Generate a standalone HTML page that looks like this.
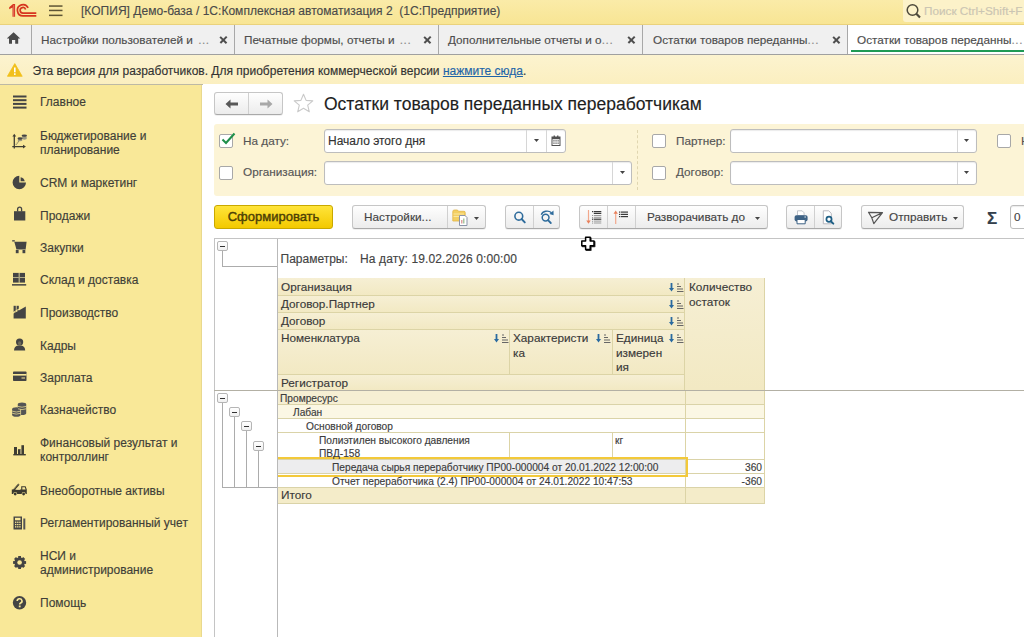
<!DOCTYPE html>
<html><head><meta charset="utf-8">
<style>
*{box-sizing:border-box;margin:0;padding:0}
html,body{width:1024px;height:637px;overflow:hidden;background:#fff;font-family:"Liberation Sans",sans-serif;font-size:12px;color:#4d4d4d;-webkit-text-stroke:0.15px currentColor}
.a{position:absolute;white-space:nowrap}
#title{position:absolute;left:0;top:0;width:1024px;height:25px;background:linear-gradient(#faeba8,#f8e594);border-bottom:1px solid #ead27c}
#tabs{position:absolute;left:0;top:25px;width:1024px;height:30px;background:#f0f0f0;border-bottom:1px solid #a0a0a0}
.tab{position:absolute;white-space:nowrap;top:0;height:29px;border-right:1px solid #a8a8a8;line-height:29px;font-size:12px;color:#4d4d4d;overflow:hidden}
.tab .t{position:absolute;left:9px;top:0px;font-size:11.75px}
.el{color:#8a8a8a;letter-spacing:0.6px;margin-left:2px}
.tab .x{position:absolute;right:7px;top:11px;width:7px;height:7px;background:none}
.tab .x:before,.tab .x:after{content:"";position:absolute;left:-0.8px;top:2.6px;width:8.6px;height:1.7px;background:#4e4e4e;transform:rotate(45deg)}
.tab .x:after{transform:rotate(-45deg)}
#warn{position:absolute;left:0;top:55px;width:1024px;height:30px;background:linear-gradient(#fcf3cf,#fbefc0);border-bottom:1px solid #bdb9a5}
#side{position:absolute;left:0;top:85px;width:202px;height:552px;background:#f9e898;border-right:1px solid #e9d98e}
.si{position:absolute;left:40px;font-size:12px;color:#413f38;line-height:14px}
.ic{position:absolute;left:12px}
#main{position:absolute;left:203px;top:84px;width:821px;height:553px;background:#fff}

.btn{position:absolute;border:1px solid #c6c6c6;border-bottom-color:#a9a9a9;border-radius:3px;background:linear-gradient(#fefefe,#ececec);box-shadow:0 1px 0 rgba(0,0,0,.06)}
.dv{position:absolute;top:0;bottom:0;width:1px;background:#d0d0d0}
.cb{position:absolute;width:14px;height:14px;border:1px solid #a8a8a8;border-radius:2px;background:#fff}
.lbl{position:absolute;white-space:nowrap;font-size:11.75px;color:#555}
.inp{position:absolute;border:1px solid #bdbdbd;border-radius:3px;background:#fff;box-shadow:inset 0 1px 1px rgba(0,0,0,.08)}
.ddv{position:absolute;top:0;bottom:0;width:1px;background:#d6d6d6}
.btxt{position:absolute;white-space:nowrap;font-size:11.75px;color:#444}

.hc{position:absolute;background:linear-gradient(#f6efd4,#f2e9c3);border-right:1px solid #dcd4a6;border-bottom:1px solid #dcd4a6}
.ht{position:absolute;white-space:nowrap;font-size:11.75px;color:#3a3a3a;line-height:14.5px}
.dr{position:absolute;left:278px;width:487px;border-bottom:1px solid #dad3a8}
.dt{position:absolute;white-space:nowrap;font-size:10.2px;color:#3c3c3c;line-height:13px}
.mb{position:absolute;width:11px;height:10px;border:1px solid #b5b5b5;border-radius:2px;background:linear-gradient(#fff,#f0f0f0)}
.mb:after{content:"";position:absolute;left:2px;top:4px;width:5px;height:1px;background:#333}
.tl{position:absolute;background:#acacac}
.si2{position:absolute}
</style></head><body>
<div id="title">
  <svg style="position:absolute;left:8px;top:3px" width="30" height="15" viewBox="0 0 30 15"><path d="M1.2 4.2 5 0.9H7.1V13.8H4.5V4.6L1.2 6.3Z" fill="#d6351f"/><path d="M5.7 2.2V13.8" stroke="#f4b0a0" stroke-width="0.5"/><g fill="none" stroke="#d6351f" stroke-width="1.7"><path d="M20.1 4.9A5.6 5.6 0 1 0 15 12.9H28.3M17.6 6.4A2.8 2.8 0 1 0 15 10.1H28.3"/></g></svg>
  <svg style="position:absolute;left:49px;top:5px" width="14" height="12" viewBox="0 0 14 12"><g fill="#5e5535"><rect x="0" y="0.3" width="13.5" height="1.5"/><rect x="0" y="4.7" width="13.5" height="1.5"/><rect x="0" y="9.6" width="13.5" height="1.5"/></g></svg>
  <div class="a" style="left:81px;top:4px;font-size:12px;color:#4a4a4a;letter-spacing:0.025px">[КОПИЯ] Демо-база / 1С:Комплексная автоматизация 2&nbsp; (1С:Предприятие)</div>
  <div style="position:absolute;left:903px;top:0;width:121px;height:22px;background:#fcf2c9;border-bottom-left-radius:3px"></div>
  <svg style="position:absolute;left:905px;top:3px" width="17" height="16" viewBox="0 0 17 16"><circle cx="7.5" cy="7" r="5.3" fill="none" stroke="#4e4a3c" stroke-width="1.5"/><path d="M11.3 10.8 15 14.5" stroke="#4e4a3c" stroke-width="2.2"/></svg>
  <div class="a" style="left:924px;top:4px;font-size:11.75px;color:#cbc5b3">Поиск Ctrl+Shift+F</div>
</div>
<div id="tabs">
  <div class="tab" style="left:0;width:32px"><svg style="position:absolute;left:7px;top:7px" width="14" height="12" viewBox="0 0 14 12"><path d="M6.6 0.3 13.3 6.4H11.2V11.8H8.2V8H5V11.8H2V6.4H-0.1Z" fill="#4a4a4a"/></svg></div>
  <div class="tab" style="left:32px;width:203px"><span class="t">Настройки пользователей и <span class="el">...</span></span><span class="x"></span></div>
  <div class="tab" style="left:235px;width:204px"><span class="t">Печатные формы, отчеты и <span class="el">...</span></span><span class="x"></span></div>
  <div class="tab" style="left:439px;width:204px"><span class="t">Дополнительные отчеты и о<span class="el" style="margin-left:0">...</span></span><span class="x"></span></div>
  <div class="tab" style="left:643px;width:205px"><span class="t" style="left:10px">Остатки товаров переданны<span class="el" style="margin-left:0">...</span></span><span class="x"></span></div>
  <div class="tab" style="left:848px;width:176px;background:#fff;border-right:none"><span class="t">Остатки товаров переданны<span class="el" style="margin-left:0">...</span></span><div style="position:absolute;left:3px;right:0;top:25px;height:2px;background:#1f9a55"></div></div>
</div>
<div id="warn">
  <svg style="position:absolute;left:7px;top:8px" width="16" height="14" viewBox="0 0 16 14"><path d="M7.8 0.6 15.2 13.3H0.4Z" fill="#f1c01c" stroke="#f1c01c" stroke-width="0.8" stroke-linejoin="round"/><rect x="7" y="4.5" width="1.6" height="4.8" fill="#fff"/><rect x="7" y="10.3" width="1.6" height="1.6" fill="#fff"/></svg>
  <div class="a" style="left:32.5px;top:9px;font-size:12px;color:#333">Эта версия для разработчиков. Для приобретения коммерческой версии <span style="color:#1e64a8;text-decoration:underline">нажмите сюда</span>.</div>
</div>
<div id="side">
  <svg class="ic" style="left:13px;top:10px" width="14" height="14" viewBox="0 0 14 14"><g fill="#444"><rect x="0" y="0.5" width="13.5" height="2"/><rect x="0" y="4.2" width="13.5" height="2"/><rect x="0" y="7.9" width="13.5" height="2"/><rect x="0" y="11.6" width="13.5" height="2"/></g></svg>
  <div class="si" style="top:10px">Главное</div>
  <svg class="ic" style="left:12px;top:48px" width="16" height="17" viewBox="0 0 16 17"><g stroke="#3f3d33" stroke-width="1.3"><path d="M2.3 3v12.6M0.3 13.6H11.5"/></g><g fill="#3f3d33"><path d="M0.4 3.6 2.3 0.8 4.2 3.6Z"/><path d="M11 11.7 13.9 13.6 11 15.5Z"/></g><path d="M3.8 11.6 7.8 7.2" stroke="#77735f" stroke-width="1.1" stroke-dasharray="1 0.7"/><g fill="#9c9880"><ellipse cx="12.3" cy="4.2" rx="2.6" ry="1.1"/><ellipse cx="12.3" cy="5.6" rx="2.6" ry="1.1"/><ellipse cx="8" cy="7.2" rx="2.4" ry="1.1"/></g><g fill="#444"><ellipse cx="12.3" cy="2.6" rx="2.7" ry="1.2"/><ellipse cx="8" cy="5.5" rx="2.5" ry="1.2"/></g></svg>
  <div class="si" style="top:43.5px">Бюджетирование и<br>планирование</div>
  <svg class="ic" style="left:12px;top:90px" width="15" height="15" viewBox="0 0 15 15"><path d="M7.3 0.8A6.7 6.7 0 1 0 14 7.5H7.3Z" fill="#444"/><path d="M8.6 2.2A4.9 4.9 0 0 1 12.7 6.2H8.6Z" fill="#444"/></svg>
  <div class="si" style="top:91px">CRM и маркетинг</div>
  <svg class="ic" style="left:14px;top:121px" width="12" height="15" viewBox="0 0 12 15"><path d="M0 5.2h11.3v9.3H0Z" fill="#444"/><path d="M3.6 5.5V3.2a2 2 0 0 1 4 0V5.5" fill="none" stroke="#444" stroke-width="1.3"/></svg>
  <div class="si" style="top:124px">Продажи</div>
  <svg class="ic" style="left:12px;top:155px" width="16" height="14" viewBox="0 0 16 14"><g fill="#444"><rect x="0.2" y="0.2" width="2.6" height="1.3"/><path d="M2.3 1.8H14.6L13.7 9H4.3Z"/><rect x="3.8" y="10" width="2.8" height="3.2"/><rect x="10.5" y="10" width="2.8" height="3.2"/></g><rect x="4.3" y="9" width="9.4" height="1" fill="#9a9578"/></svg>
  <div class="si" style="top:156px">Закупки</div>
  <svg class="ic" style="left:12px;top:187px" width="15" height="14" viewBox="0 0 15 14"><g fill="#444"><rect x="1" y="0.9" width="5.8" height="4.3"/><rect x="7.5" y="0.9" width="5.5" height="4.3"/><rect x="1" y="6" width="5.8" height="4.6"/><rect x="7.5" y="6" width="5.5" height="4.6"/><rect x="0" y="12.1" width="14.2" height="1.5"/></g><g fill="#a8a488"><rect x="1" y="5.2" width="12" height="0.8"/><rect x="6.8" y="0.9" width="0.7" height="9.7"/></g></svg>
  <div class="si" style="top:188px">Склад и доставка</div>
  <svg class="ic" style="left:13px;top:220px" width="14" height="14" viewBox="0 0 14 14"><g fill="#444"><rect x="0.6" y="0.8" width="2.2" height="6.5"/><rect x="3.6" y="0.8" width="2.2" height="5"/><path d="M0.6 8.6 12.8 1.4V13.6H0.6Z"/></g><path d="M0 7.6 13 0" stroke="#f9e898" stroke-width="1"/></svg>
  <div class="si" style="top:221px">Производство</div>
  <svg class="ic" style="left:14px;top:253px" width="12" height="13" viewBox="0 0 12 13"><path d="M0 12.6C0 9.2 1.8 7.8 3.8 7.5H7.4C9.4 7.8 11.2 9.2 11.2 12.6Z" fill="#444"/><circle cx="5.6" cy="4" r="3.6" fill="#444"/><ellipse cx="5.6" cy="5.2" rx="1.6" ry="2" fill="#6e6a58"/></svg>
  <div class="si" style="top:253.5px">Кадры</div>
  <svg class="ic" style="left:13px;top:286px" width="14" height="11" viewBox="0 0 14 11"><rect x="0" y="0.5" width="13.5" height="9.5" rx="0.8" fill="#444"/><rect x="0" y="3" width="13.5" height="1.6" fill="#f9e898"/><rect x="8.5" y="6.5" width="3.5" height="1" fill="#f9e898"/></svg>
  <div class="si" style="top:285.5px">Зарплата</div>
  <svg class="ic" style="left:12px;top:317px" width="15" height="15" viewBox="0 0 15 15"><g fill="#555"><ellipse cx="10" cy="2.2" rx="4.2" ry="1.8"/><rect x="5.8" y="2.2" width="8.4" height="9"/><ellipse cx="10" cy="11.2" rx="4.2" ry="1.8"/><ellipse cx="4.4" cy="7" rx="4.2" ry="1.8"/><rect x="0.2" y="7" width="8.4" height="6"/><ellipse cx="4.4" cy="13" rx="4.2" ry="1.8"/></g><g stroke="#f9e898" stroke-width="0.7" fill="none"><path d="M6 4.4q4 1.6 8.2 0M6 6.8q4 1.6 8.2 0M0.3 9.2q4 1.6 8.2 0M0.3 11.3q4 1.6 8.2 0"/><path d="M8.6 7.3v5.5"/></g></svg>
  <div class="si" style="top:318px">Казначейство</div>
  <svg class="ic" style="left:13px;top:359px" width="13" height="12" viewBox="0 0 13 12"><g fill="#3f3d33"><rect x="1" y="3" width="3" height="7.2"/><rect x="5" y="5.2" width="2.2" height="5"/><rect x="8.4" y="1.2" width="2.6" height="9"/><rect x="0.3" y="10" width="12.5" height="1.4"/></g><rect x="7.2" y="5" width="1.2" height="5" fill="#8a8672"/></svg>
  <div class="si" style="top:351px">Финансовый результат и<br>контроллинг</div>
  <svg class="ic" style="left:11px;top:398px" width="17" height="13" viewBox="0 0 17 13"><path d="M1.3 7.2 7.3 0.6 8.5 1.8 3 8" fill="#3c3a30"/><path d="M2 7 7.5 1.3" stroke="#f9e898" stroke-width="0.6" stroke-dasharray="0.8 0.9"/><path d="M0.8 6.5V11H15.8V6.5L14.6 3.2H10.2V6.5Z" fill="#3c3a30"/><path d="M11.3 4.3H13.8L14.6 6.5H11.3Z" fill="#f9e898"/><path d="M4.5 6.8 9 3.6V6.8Z" fill="#f3e3a0"/><circle cx="4.2" cy="11" r="2" fill="#f9e898"/><circle cx="12.6" cy="11" r="2" fill="#f9e898"/><circle cx="4.2" cy="11" r="1.4" fill="#3c3a30"/><circle cx="12.6" cy="11" r="1.4" fill="#3c3a30"/></svg>
  <div class="si" style="top:399px">Внеоборотные активы</div>
  <svg class="ic" style="left:13px;top:430px" width="13" height="15" viewBox="0 0 13 15"><path d="M0.5 1.5h8.5v13H0.5Z" fill="#444"/><rect x="2" y="2.8" width="5.5" height="2.5" fill="#f9e898"/><g fill="#f9e898"><rect x="2" y="6.6" width="1.4" height="1.3"/><rect x="4.1" y="6.6" width="1.4" height="1.3"/><rect x="6.2" y="6.6" width="1.4" height="1.3"/><rect x="2" y="8.9" width="1.4" height="1.3"/><rect x="4.1" y="8.9" width="1.4" height="1.3"/><rect x="6.2" y="8.9" width="1.4" height="1.3"/><rect x="2" y="11.2" width="1.4" height="1.3"/><rect x="4.1" y="11.2" width="1.4" height="1.3"/><rect x="6.2" y="11.2" width="1.4" height="1.3"/></g><path d="M10.3 3.5h2v11h-2Z" fill="#555"/></svg>
  <div class="si" style="top:430.5px">Регламентированный учет</div>
  <svg class="ic" style="left:12px;top:470px" width="15" height="15" viewBox="0 0 15 15"><g fill="#444"><circle cx="7.6" cy="7.5" r="5.2"/><g transform="translate(7.6 7.5)"><rect x="-1.4" y="-6.5" width="2.8" height="13"/><rect x="-1.4" y="-6.5" width="2.8" height="13" transform="rotate(45)"/><rect x="-1.4" y="-6.5" width="2.8" height="13" transform="rotate(90)"/><rect x="-1.4" y="-6.5" width="2.8" height="13" transform="rotate(135)"/></g></g><circle cx="7.6" cy="7.5" r="2.3" fill="#f9e898"/></svg>
  <div class="si" style="top:464px">НСИ и<br>администрирование</div>
  <svg class="ic" style="left:12px;top:510px" width="15" height="15" viewBox="0 0 15 15"><circle cx="7.5" cy="7.7" r="6.7" fill="#444"/><path d="M5.2 6a2.4 2.2 0 1 1 3.4 2c-.7.4-.9.8-.9 1.5" fill="none" stroke="#f9e898" stroke-width="1.6"/><rect x="6.8" y="10.5" width="1.8" height="1.8" fill="#f9e898"/></svg>
  <div class="si" style="top:511px">Помощь</div>
</div>
<div id="main"></div>
<div class="btn" style="left:214px;top:92px;width:69px;height:23px"><div class="dv" style="left:33px"></div>
  <svg style="position:absolute;left:10px;top:6px" width="14" height="10" viewBox="0 0 14 10"><path d="M0.5 5 5.5 0.5V3.6H13V6.4H5.5V9.5Z" fill="#585858"/></svg>
  <svg style="position:absolute;left:44px;top:6px" width="14" height="10" viewBox="0 0 14 10"><path d="M13.5 5 8.5 0.5V3.6H1V6.4H8.5V9.5Z" fill="#a8a8a8"/></svg>
</div>
<svg style="position:absolute;left:293px;top:93px" width="21" height="21" viewBox="0 0 21 21"><path d="M10.5 1.2 13.1 7.4 19.8 7.9 14.7 12.2 16.3 18.8 10.5 15.3 4.7 18.8 6.3 12.2 1.2 7.9 7.9 7.4Z" fill="none" stroke="#c9c9c9" stroke-width="1.1" stroke-linejoin="round"/></svg>
<div class="a" style="left:324px;top:94px;font-size:17.5px;color:#1e1e1e">Остатки товаров переданных переработчикам</div>

<div style="position:absolute;left:214px;top:124px;width:810px;height:72px;background:#fcf4d6;border-radius:3px 0 0 3px"></div>
<div class="cb" style="left:219px;top:134px"></div>
<svg style="position:absolute;left:221px;top:132px" width="15" height="14" viewBox="0 0 15 14"><path d="M1.5 7.5 5 11 13.5 1.5" fill="none" stroke="#1f8f4a" stroke-width="2.1"/></svg>
<div class="lbl" style="left:243px;top:134px">На дату:</div>
<div class="cb" style="left:219px;top:166px"></div>
<div class="lbl" style="left:243px;top:165px">Организация:</div>
<div class="inp" style="left:324px;top:129px;width:242px;height:24px"><div class="ddv" style="left:201px"></div><div class="ddv" style="left:221px"></div>
  <div class="btxt" style="left:3px;top:4px;color:#333;font-size:12px">Начало этого дня</div>
  <svg style="position:absolute;left:209px;top:9px" width="6" height="4"><path d="M0 0h5L2.5 3Z" fill="#444"/></svg>
  <svg style="position:absolute;left:226px;top:5px" width="10" height="11" viewBox="0 0 10 11"><rect x="1" y="2" width="8" height="8.5" fill="#fff" stroke="#505050" stroke-width="1"/><rect x="1" y="2" width="8" height="2.2" fill="#505050"/><rect x="2.6" y="0.5" width="1.3" height="2.5" fill="#505050"/><rect x="6.1" y="0.5" width="1.3" height="2.5" fill="#505050"/><g fill="#777"><rect x="2.2" y="5.2" width="1.5" height="1.3"/><rect x="4.3" y="5.2" width="1.5" height="1.3"/><rect x="6.4" y="5.2" width="1.5" height="1.3"/><rect x="2.2" y="7.5" width="1.5" height="1.3"/><rect x="4.3" y="7.5" width="1.5" height="1.3"/><rect x="6.4" y="7.5" width="1.5" height="1.3"/></g></svg>
</div>
<div class="inp" style="left:324px;top:161px;width:308px;height:24px"><div class="ddv" style="left:287px"></div>
  <svg style="position:absolute;left:295px;top:9px" width="6" height="4"><path d="M0 0h5L2.5 3Z" fill="#444"/></svg>
</div>
<div style="position:absolute;left:637px;top:130px;width:0;height:60px;border-left:1px dashed #e0d6b0"></div>
<div class="cb" style="left:652px;top:134px"></div>
<div class="lbl" style="left:676px;top:134px">Партнер:</div>
<div class="cb" style="left:652px;top:166px"></div>
<div class="lbl" style="left:676px;top:165px">Договор:</div>
<div class="inp" style="left:730px;top:129px;width:247px;height:24px"><div class="ddv" style="left:226px"></div>
  <svg style="position:absolute;left:233px;top:9px" width="6" height="4"><path d="M0 0h5L2.5 3Z" fill="#444"/></svg>
</div>
<div class="inp" style="left:730px;top:161px;width:247px;height:24px"><div class="ddv" style="left:226px"></div>
  <svg style="position:absolute;left:233px;top:9px" width="6" height="4"><path d="M0 0h5L2.5 3Z" fill="#444"/></svg>
</div>
<div class="cb" style="left:997px;top:134px"></div>
<div class="lbl" style="left:1021px;top:134px">Н</div>

<div style="position:absolute;left:214px;top:205px;width:119px;height:24px;border:1px solid #c9a800;border-radius:3px;background:linear-gradient(#ffe43a,#f3c900)"><div class="btxt" style="left:0;width:117px;text-align:center;top:3px;font-size:13px;-webkit-text-stroke:0.4px #4d3f05;color:#4d3f05">Сформировать</div></div>
<div class="btn" style="left:352px;top:205px;width:134px;height:24px"><div class="dv" style="left:94px"></div>
  <div class="btxt" style="left:11px;top:4px">Настройки...</div>
  <svg style="position:absolute;left:99px;top:3px" width="18" height="18" viewBox="0 0 18 18"><path d="M0.8 2.5C0.8 1.5 1.5 1 2.5 1h3l1 1.3h5.5c.8 0 1.2.5 1.2 1.2V12H0.8Z" fill="#f3cf62" stroke="#e2b547" stroke-width="0.8"/><rect x="1.5" y="4.5" width="10.5" height="1" fill="#fbe7a0"/><rect x="1.5" y="7" width="10.5" height="1" fill="#fbe7a0"/><path d="M7.5 6.5h5.5l2 2V16.5H7.5Z" fill="#fff" stroke="#8b94a8" stroke-width="1"/><rect x="9" y="11" width="1.5" height="3.5" fill="#e0a0a0"/><rect x="11" y="9.5" width="1.5" height="5" fill="#a8c8a0"/></svg>
  <svg style="position:absolute;left:121px;top:11px" width="6" height="4"><path d="M0 0h5L2.5 3Z" fill="#444"/></svg>
</div>
<div class="btn" style="left:505px;top:205px;width:55px;height:24px"><div class="dv" style="left:27px"></div>
  <svg style="position:absolute;left:0;top:0" width="55" height="22" viewBox="0 0 55 22"><circle cx="12.8" cy="10.2" r="3.9" fill="none" stroke="#2f6c9c" stroke-width="1.6"/><path d="M15.6 13 18.8 16.4" stroke="#2f6c9c" stroke-width="1.9" stroke-linecap="round"/>
  <circle cx="39.6" cy="11.6" r="3.4" fill="none" stroke="#2f6c9c" stroke-width="1.5"/><path d="M42 14.2 44.8 17" stroke="#2f6c9c" stroke-width="1.8" stroke-linecap="round"/><path d="M35.3 8.8A6 5 0 0 1 45.5 6.8" fill="none" stroke="#2f6c9c" stroke-width="1.4"/><path d="M47.5 4.6 47.6 9.2 43.4 8Z" fill="#2f6c9c"/></svg>
</div>
<div class="btn" style="left:579px;top:205px;width:189px;height:24px"><div class="dv" style="left:27px"></div><div class="dv" style="left:55px"></div>
  <svg style="position:absolute;left:0;top:0" width="56" height="22" viewBox="0 0 56 22"><path d="M8.5 4v11" stroke="#f2a88c" stroke-width="1.2"/><path d="M6.3 14.5h4.4L8.5 17.8Z" fill="#e8805c"/>
  <g fill="#3a3a3a"><rect x="12" y="5" width="1.2" height="1.2"/><rect x="13.8" y="5" width="7.5" height="1.2"/><rect x="13.8" y="6.8" width="7.5" height="1.2"/><rect x="12" y="12.6" width="1.2" height="1.2"/><rect x="13.8" y="12.6" width="7.5" height="1.2"/></g>
  <g fill="#9a9a9a"><rect x="12" y="9" width="1" height="1"/><rect x="13.8" y="9" width="7.5" height="1"/><rect x="12" y="11" width="1" height="1"/><rect x="13.8" y="10.8" width="7.5" height="1"/><rect x="12" y="14.8" width="1" height="1"/><rect x="13.8" y="14.6" width="7.5" height="1"/><rect x="12" y="16.6" width="1" height="1"/><rect x="13.8" y="16.5" width="7.5" height="1"/></g>
  <path d="M35.7 7v11" stroke="#f2a88c" stroke-width="1.2"/><path d="M33.5 7.8h4.4L35.7 4.5Z" fill="#e8805c"/>
  <g fill="#3a3a3a"><rect x="39" y="5.5" width="1.2" height="1.2"/><rect x="40.8" y="5.5" width="7.2" height="1.2"/><rect x="39" y="7.8" width="1.2" height="1.2"/><rect x="40.8" y="7.8" width="7.2" height="1.2"/><rect x="39" y="10" width="1.2" height="1.2"/><rect x="40.8" y="10" width="7.2" height="1.2"/></g></svg>
  <div class="btxt" style="left:67px;top:4px">Разворачивать до</div>
  <svg style="position:absolute;left:175px;top:11px" width="6" height="4"><path d="M0 0h5L2.5 3Z" fill="#444"/></svg>
</div>
<div class="btn" style="left:786px;top:205px;width:56px;height:24px"><div class="dv" style="left:27px"></div>
  <svg style="position:absolute;left:0;top:0" width="56" height="22" viewBox="0 0 56 22"><path d="M10.5 4.8h4.6l2 2V9.5H10.5Z" fill="#fff" stroke="#b8bcc4" stroke-width="0.9"/><rect x="7.6" y="9.2" width="13" height="6.2" rx="1.8" fill="#3d6285"/><rect x="17.4" y="10.5" width="1.6" height="1" fill="#dfe6ee"/><path d="M10 13.5H18.2V17.8H10Z" fill="#fff" stroke="#3d6285" stroke-width="1"/>
  <path d="M36.3 4.8h5.4l2.6 2.6v10.4h-8Z" fill="#fff" stroke="#b0b0b8" stroke-width="0.9"/><circle cx="42" cy="13.3" r="2.6" fill="none" stroke="#1e5f85" stroke-width="1.7"/><path d="M43.8 15.2 46.3 17.6" stroke="#1e5f85" stroke-width="2" stroke-linecap="round"/></svg>
</div>
<div class="btn" style="left:861px;top:205px;width:103px;height:24px">
  <svg style="position:absolute;left:5px;top:5px" width="17" height="14" viewBox="0 0 17 14"><path d="M1.5 1.3 15.5 1.6 6.8 12.6 4.8 6.8Z M15.5 1.6 4.8 6.8" fill="none" stroke="#555" stroke-width="1.2" stroke-linejoin="round"/></svg>
  <div class="btxt" style="left:27px;top:4px">Отправить</div>
  <svg style="position:absolute;left:91px;top:11px" width="6" height="4"><path d="M0 0h5L2.5 3Z" fill="#444"/></svg>
</div>
<div class="a" style="left:987px;top:209px;font-size:17px;font-weight:bold;color:#34404c">&Sigma;</div>
<div class="inp" style="left:1010px;top:205px;width:30px;height:24px"><div class="btxt" style="left:3px;top:4px">0</div></div>


<div style="position:absolute;left:214px;top:238px;width:810px;height:399px;border-left:1px solid #c4c4c4;border-top:1px solid #c4c4c4"></div>
<div class="tl" style="left:277px;top:239px;width:1px;height:398px;background:#b9b9b9"></div>
<div class="tl" style="left:214px;top:390px;width:810px;height:1px;background:#b3b0a4"></div>
<div class="tl" style="left:222px;top:250px;width:1px;height:16px"></div>
<div class="tl" style="left:222px;top:266px;width:55px;height:1px"></div>
<div class="mb" style="left:217px;top:241px"></div>
<div class="ht" style="left:280.5px;top:252px;color:#444;font-size:12px">Параметры:</div>
<div class="ht" style="left:360px;top:252px;color:#444;font-size:12px;letter-spacing:0.12px">На дату: 19.02.2026 0:00:00</div>

<div class="hc" style="left:278px;top:278px;width:407px;height:18px"></div>
<div class="hc" style="left:278px;top:296px;width:407px;height:17px"></div>
<div class="hc" style="left:278px;top:313px;width:407px;height:17px"></div>
<div class="hc" style="left:278px;top:330px;width:232px;height:45px"></div>
<div class="hc" style="left:510px;top:330px;width:103px;height:45px"></div>
<div class="hc" style="left:613px;top:330px;width:72px;height:45px"></div>
<div class="hc" style="left:278px;top:375px;width:407px;height:15px;border-bottom:none"></div>
<div class="hc" style="left:685px;top:278px;width:80px;height:112px;border-bottom:none"></div>
<div class="ht" style="left:281px;top:280px">Организация</div>
<div class="ht" style="left:281px;top:297px">Договор.Партнер</div>
<div class="ht" style="left:281px;top:314px">Договор</div>
<div class="ht" style="left:281px;top:331px">Номенклатура</div>
<div class="ht" style="left:513px;top:331px">Характеристи<br>ка</div>
<div class="ht" style="left:616px;top:331px">Единица<br>измерен<br>ия</div>
<div class="ht" style="left:281px;top:376px">Регистратор</div>
<div class="ht" style="left:689px;top:280px">Количество<br>остаток</div>
<svg class="si2" style="left:669px;top:283px" width="15" height="9" viewBox="0 0 15 9"><path d="M2.5 0v6" stroke="#2a6aa0" stroke-width="1.8"/><path d="M0 5h5L2.5 8.5Z" fill="#2a6aa0"/><g fill="#666"><rect x="8" y="0.5" width="2" height="1"/><rect x="8" y="3" width="4" height="1"/><rect x="8" y="5.5" width="6" height="1"/><rect x="8" y="8" width="6.5" height="1"/></g></svg><svg class="si2" style="left:669px;top:300px" width="15" height="9" viewBox="0 0 15 9"><path d="M2.5 0v6" stroke="#2a6aa0" stroke-width="1.8"/><path d="M0 5h5L2.5 8.5Z" fill="#2a6aa0"/><g fill="#666"><rect x="8" y="0.5" width="2" height="1"/><rect x="8" y="3" width="4" height="1"/><rect x="8" y="5.5" width="6" height="1"/><rect x="8" y="8" width="6.5" height="1"/></g></svg><svg class="si2" style="left:669px;top:317px" width="15" height="9" viewBox="0 0 15 9"><path d="M2.5 0v6" stroke="#2a6aa0" stroke-width="1.8"/><path d="M0 5h5L2.5 8.5Z" fill="#2a6aa0"/><g fill="#666"><rect x="8" y="0.5" width="2" height="1"/><rect x="8" y="3" width="4" height="1"/><rect x="8" y="5.5" width="6" height="1"/><rect x="8" y="8" width="6.5" height="1"/></g></svg><svg class="si2" style="left:494px;top:334px" width="15" height="9" viewBox="0 0 15 9"><path d="M2.5 0v6" stroke="#2a6aa0" stroke-width="1.8"/><path d="M0 5h5L2.5 8.5Z" fill="#2a6aa0"/><g fill="#666"><rect x="8" y="0.5" width="2" height="1"/><rect x="8" y="3" width="4" height="1"/><rect x="8" y="5.5" width="6" height="1"/><rect x="8" y="8" width="6.5" height="1"/></g></svg><svg class="si2" style="left:596px;top:334px" width="15" height="9" viewBox="0 0 15 9"><path d="M2.5 0v6" stroke="#2a6aa0" stroke-width="1.8"/><path d="M0 5h5L2.5 8.5Z" fill="#2a6aa0"/><g fill="#666"><rect x="8" y="0.5" width="2" height="1"/><rect x="8" y="3" width="4" height="1"/><rect x="8" y="5.5" width="6" height="1"/><rect x="8" y="8" width="6.5" height="1"/></g></svg><svg class="si2" style="left:669px;top:334px" width="15" height="9" viewBox="0 0 15 9"><path d="M2.5 0v6" stroke="#2a6aa0" stroke-width="1.8"/><path d="M0 5h5L2.5 8.5Z" fill="#2a6aa0"/><g fill="#666"><rect x="8" y="0.5" width="2" height="1"/><rect x="8" y="3" width="4" height="1"/><rect x="8" y="5.5" width="6" height="1"/><rect x="8" y="8" width="6.5" height="1"/></g></svg>
<div class="dr" style="top:391px;height:14px;background:#f6efd3"></div>
<div class="dr" style="top:405px;height:14px;background:#fbf7e4"></div>
<div class="dr" style="top:419px;height:14px;background:#fff"></div>
<div class="dr" style="top:433px;height:27px;background:#fff"></div>
<div class="dr" style="top:460px;height:14px;background:#fff"></div><div style="position:absolute;left:278px;top:460px;width:407px;height:13px;background:#ededee"></div>
<div class="dr" style="top:474px;height:14px;background:#fff"></div>
<div class="dr" style="top:488px;height:16px;background:#f4ecc9"></div>
<div class="tl" style="left:685px;top:391px;width:1px;height:113px;background:#dcd4a6"></div>
<div class="tl" style="left:764px;top:391px;width:1px;height:113px;background:#dcd4a6"></div>
<div class="tl" style="left:509px;top:433px;width:1px;height:27px;background:#dcd4a6"></div>
<div class="tl" style="left:612px;top:433px;width:1px;height:27px;background:#dcd4a6"></div>
<div style="position:absolute;left:278px;top:457px;width:410px;height:2px;background:#f3c93a"></div><div style="position:absolute;left:278px;top:475px;width:410px;height:2px;background:#f3c93a"></div><div style="position:absolute;left:686px;top:457px;width:2px;height:20px;background:#f3c93a;border-radius:0 1px 1px 0"></div>
<div class="dt" style="left:280px;top:392px">Промресурс</div>
<div class="dt" style="left:293px;top:406px">Лабан</div>
<div class="dt" style="left:306px;top:420px">Основной договор</div>
<div class="dt" style="left:319px;top:434px">Полиэтилен высокого давления<br>ПВД-158</div>
<div class="dt" style="left:615px;top:434px">кг</div>
<div class="dt" style="left:332px;top:461px">Передача сырья переработчику ПР00-000004 от 20.01.2022 12:00:00</div>
<div class="dt" style="left:332px;top:475px">Отчет переработчика (2.4) ПР00-000004 от 24.01.2022 10:47:53</div>
<div class="dt" style="left:700px;width:62px;text-align:right;top:461px">360</div>
<div class="dt" style="left:700px;width:62px;text-align:right;top:475px">-360</div>
<div class="ht" style="left:281px;top:488px">Итого</div>
<div class="tl" style="left:222px;top:402px;width:1px;height:86px"></div>
<div class="tl" style="left:234px;top:416px;width:1px;height:72px"></div>
<div class="tl" style="left:246px;top:430px;width:1px;height:58px"></div>
<div class="tl" style="left:258px;top:451px;width:1px;height:37px"></div>
<div class="tl" style="left:222px;top:487px;width:55px;height:1px"></div>
<div class="mb" style="left:217px;top:393px"></div>
<div class="mb" style="left:229px;top:407px"></div>
<div class="mb" style="left:241px;top:421px"></div>
<div class="mb" style="left:253px;top:441px"></div>
<svg style="position:absolute;left:580px;top:236px" width="18" height="17" viewBox="0 0 18 17"><path d="M5.6 1.2H10.2V5.1H14V9.7H10.2V13.5H5.6V9.7H1.8V5.1H5.6Z" transform="translate(0.7 0.7)" fill="#333" stroke="#333" stroke-width="1.5" stroke-linejoin="round"/><path d="M5.6 1.2H10.2V5.1H14V9.7H10.2V13.5H5.6V9.7H1.8V5.1H5.6Z" fill="#fff" stroke="#000" stroke-width="1.5" stroke-linejoin="round"/></svg>
</body></html>
